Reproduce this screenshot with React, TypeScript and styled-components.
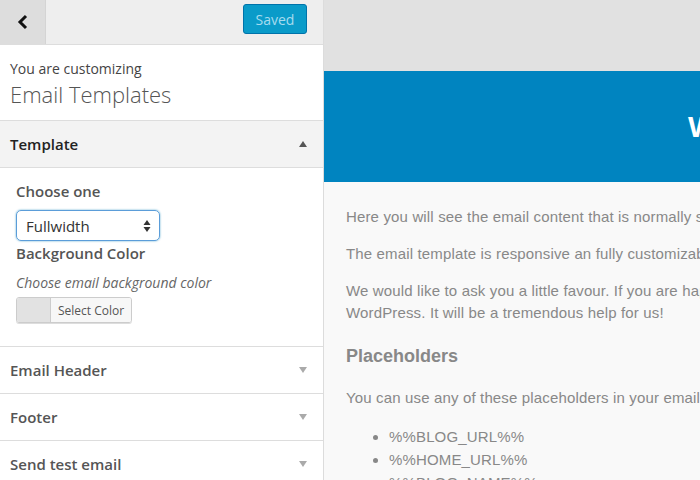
import React from "react";
import styled, { createGlobalStyle } from "styled-components";

const Global = createGlobalStyle`
  html, body { margin: 0; padding: 0; }
  body { width: 700px; height: 480px; overflow: hidden; background: #f9f9f9; }
  * { box-sizing: border-box; }
`;

const Page = styled.div`
  display: flex;
  width: 700px;
  height: 480px;
  overflow: hidden;
`;

const Sidebar = styled.div`
  width: 324px;
  flex-shrink: 0;
  background: #fff;
  border-right: 1px solid #dcdcdc;
  font-family: "Open Sans", sans-serif;
  color: #444;
  display: flex;
  flex-direction: column;
  overflow: hidden;
  & > * {
    flex-shrink: 0;
  }
`;

const TopBar = styled.div`
  height: 45px;
  display: flex;
  align-items: stretch;
  justify-content: space-between;
  background: #eee;
  border-bottom: 1px solid #ddd;
`;

const BackButton = styled.div`
  width: 46px;
  background: #ddd;
  border-right: 1px solid #d4d4d4;
  display: flex;
  align-items: center;
  justify-content: center;
`;

const SavedButton = styled.div`
  align-self: center;
  margin-right: 16px;
  margin-top: -6px;
  width: 64px;
  height: 30px;
  border: 1px solid #0073aa;
  border-radius: 3px;
  background: #0a9bc9;
  color: #a7dbef;
  font-size: 14px;
  display: flex;
  align-items: center;
  justify-content: center;
`;

const Intro = styled.div`
  padding: 14px 10px 11px;
  border-bottom: 1px solid #ddd;
`;

const IntroSmall = styled.div`
  font-size: 14px;
  line-height: 20px;
`;

const IntroTitle = styled.div`
  font-size: 22px;
  line-height: 30px;
  color: #555;
  font-weight: 300;
`;

const SectionHead = styled.div<{ $open?: boolean }>`
  height: 47px;
  padding: 0 16px 0 10px;
  display: flex;
  align-items: center;
  justify-content: space-between;
  font-size: 15px;
  font-weight: 600;
  color: ${(p) => (p.$open ? "#222" : "#555")};
  background: ${(p) => (p.$open ? "#f3f3f3" : "#fff")};
  border-bottom: 1px solid #ddd;
`;

const Arrow = styled.span<{ $up?: boolean }>`
  width: 0;
  height: 0;
  border-left: 4px solid transparent;
  border-right: 4px solid transparent;
  ${(p) =>
    p.$up
      ? "border-bottom: 6px solid #555;"
      : "border-top: 6px solid #aaa;"}
`;

const SectionBody = styled.div`
  padding: 12px 16px 23px;
  border-bottom: 1px solid #ddd;
`;

const Label = styled.div`
  font-size: 15px;
  font-weight: 600;
  color: #555;
  line-height: 22px;
`;

const SelectBox = styled.div`
  margin-top: 8px;
  width: 144px;
  height: 31px;
  border: 1px solid #5b9dd9;
  border-radius: 5px;
  box-shadow: 0 0 2px rgba(30, 140, 190, 0.8);
  padding: 0 8px 0 9px;
  display: flex;
  align-items: center;
  justify-content: space-between;
  font-size: 15px;
  color: #333;
  margin-bottom: 1px;
`;

const Hint = styled.div`
  margin-top: 9px;
  font-size: 14px;
  font-style: italic;
  color: #666;
  line-height: 20px;
`;

const ColorButton = styled.div`
  margin-top: 4px;
  display: flex;
  width: 116px;
  height: 26px;
  border: 1px solid #ccc;
  border-radius: 3px;
  overflow: hidden;
  box-shadow: 0 1px 0 #ddd;
`;

const Swatch = styled.div`
  width: 34px;
  background: #e2e2e2;
  border-right: 1px solid #ccc;
`;

const ColorLabel = styled.div`
  flex: 1;
  background: #f7f7f7;
  font-size: 12px;
  color: #555;
  display: flex;
  align-items: center;
  justify-content: center;
`;

const Preview = styled.div`
  flex: 1;
  display: flex;
  flex-direction: column;
  background: #f9f9f9;
  font-family: "Liberation Sans", Arial, sans-serif;
  overflow: hidden;
`;

const PreviewTop = styled.div`
  height: 71px;
  flex-shrink: 0;
  background: #e1e1e1;
`;

const Banner = styled.div`
  height: 111px;
  flex-shrink: 0;
  background: #0084c0;
  display: flex;
  align-items: center;
  padding-left: 364px;
  white-space: nowrap;
  color: #fff;
  font-size: 30px;
  font-weight: bold;
`;

const Body = styled.div`
  padding: 24px 0 0 22px;
  width: 700px;
  color: #888;
  font-size: 15px;
  letter-spacing: 0.15px;
  line-height: 22px;
`;

const Para = styled.p`
  margin: 0 0 15px;
`;

const SubHead = styled.h3`
  margin: 20px 0 19px;
  font-size: 18px;
  font-weight: bold;
  color: #888;
  line-height: 24px;
  letter-spacing: 0;
`;

const List = styled.ul`
  margin: 16px 0 0;
  padding-left: 43px;
  li {
    line-height: 23px;
  }
`;

function Chevron() {
  return (
    <svg width="12" height="16" viewBox="0 0 12 16">
      <path d="M9 2 L3 8 L9 14" fill="none" stroke="#111" strokeWidth="3" />
    </svg>
  );
}

function UpDown() {
  return (
    <svg width="8" height="14" viewBox="0 0 8 14">
      <path d="M4 1 L7.5 6 L0.5 6 Z" fill="#333" />
      <path d="M4 13 L7.5 8 L0.5 8 Z" fill="#333" />
    </svg>
  );
}

export default function App() {
  return (
    <>
      <Global />
      <Page>
        <Sidebar>
          <TopBar>
            <BackButton>
              <Chevron />
            </BackButton>
            <SavedButton>Saved</SavedButton>
          </TopBar>
          <Intro>
            <IntroSmall>You are customizing</IntroSmall>
            <IntroTitle>Email Templates</IntroTitle>
          </Intro>
          <SectionHead $open>
            Template
            <Arrow $up />
          </SectionHead>
          <SectionBody>
            <Label>Choose one</Label>
            <SelectBox>
              Fullwidth
              <UpDown />
            </SelectBox>
            <Label>Background Color</Label>
            <Hint>Choose email background color</Hint>
            <ColorButton>
              <Swatch />
              <ColorLabel>Select Color</ColorLabel>
            </ColorButton>
          </SectionBody>
          <SectionHead>
            Email Header
            <Arrow />
          </SectionHead>
          <SectionHead>
            Footer
            <Arrow />
          </SectionHead>
          <SectionHead>
            Send test email
            <Arrow />
          </SectionHead>
        </Sidebar>
        <Preview>
          <PreviewTop />
          <Banner>Welcome</Banner>
          <Body>
            <Para>Here you will see the email content that is normally sent by WordPress.</Para>
            <Para>The email template is responsive an fully customizable.</Para>
            <Para>
              We would like to ask you a little favour. If you are happy with the plugin,
              <br />
              WordPress. It will be a tremendous help for us!
            </Para>
            <SubHead>Placeholders</SubHead>
            <Para>You can use any of these placeholders in your email templates.</Para>
            <List>
              <li>%%BLOG_URL%%</li>
              <li>%%HOME_URL%%</li>
              <li>%%BLOG_NAME%%</li>
            </List>
          </Body>
        </Preview>
      </Page>
    </>
  );
}
